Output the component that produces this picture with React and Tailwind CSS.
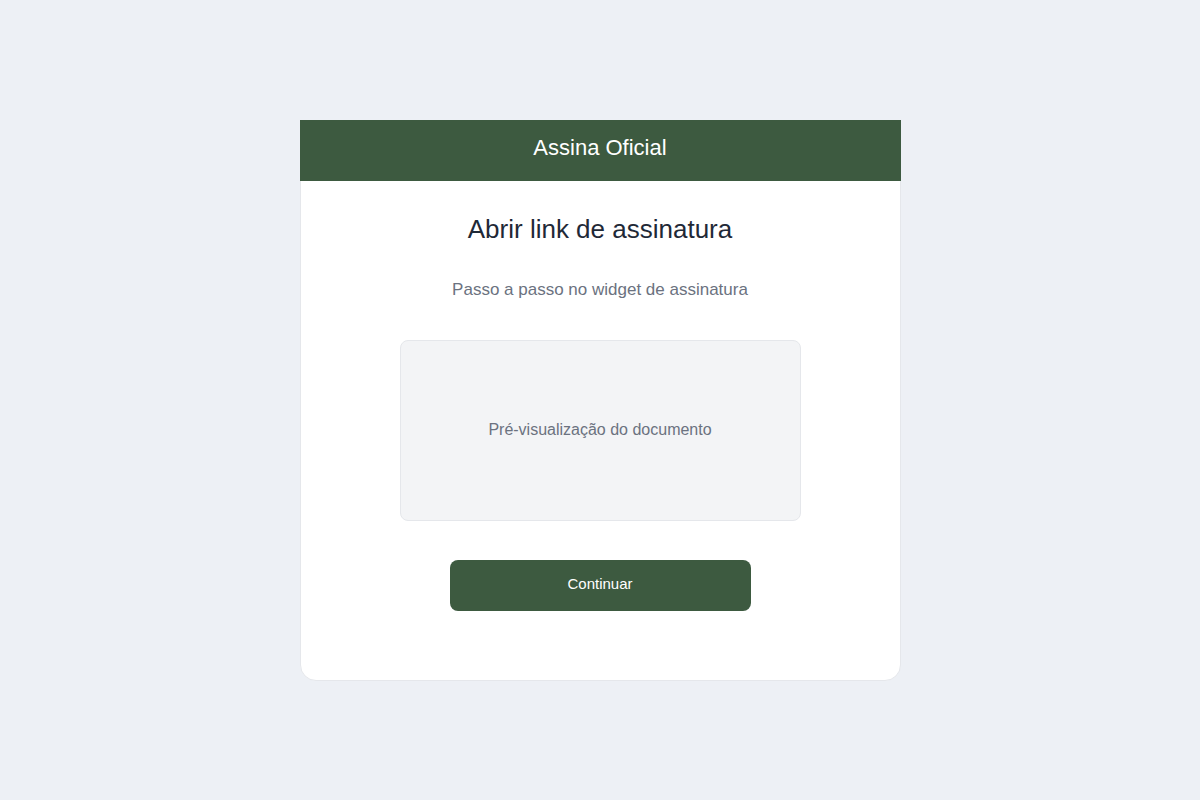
export default function App() {
  return (
    <div
      className="min-h-screen w-full bg-[#edf0f5] flex justify-center pt-[120px]"
      style={{ fontFamily: '"Liberation Sans", Arial, sans-serif' }}
    >
      <div className="w-[601px] h-[561px] bg-white border border-[#e5e7eb] rounded-2xl flex flex-col items-center">
        <div className="w-[601px] -mx-px -mt-px h-[61px] pb-[6px] bg-[#3d5a40] flex items-center justify-center">
          <span className="text-white text-[22px] leading-none">Assina Oficial</span>
        </div>
        <h1 className="mt-[32px] text-[26px] leading-[32px] text-[#1f2937]">Abrir link de assinatura</h1>
        <p className="mt-[31px] text-[17px] leading-[28px] text-[#6b7280]">Passo a passo no widget de assinatura</p>
        <div className="mt-[36px] w-[401px] h-[181px] pb-[2px] bg-[#f3f4f6] border border-[#e5e7eb] rounded-lg flex items-center justify-center">
          <span className="text-[16px] text-[#6b7280]">Pré-visualização do documento</span>
        </div>
        <button className="mt-[39px] w-[301px] h-[51px] pb-[2px] bg-[#3d5a40] rounded-lg text-white text-[15px]">
          Continuar
        </button>
      </div>
    </div>
  );
}
